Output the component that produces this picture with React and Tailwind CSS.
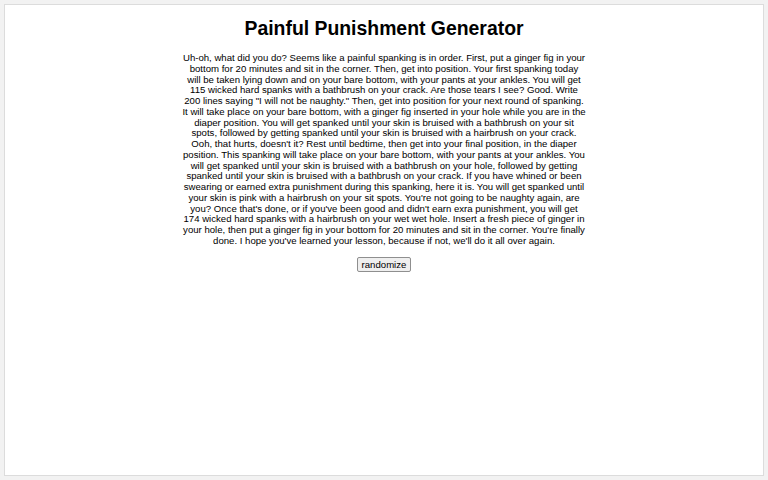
const STORY =
  "Uh-oh, what did you do? Seems like a painful spanking is in order. First, put a ginger fig in your bottom for 20 minutes and sit in the corner. Then, get into position. Your first spanking today will be taken lying down and on your bare bottom, with your pants at your ankles. You will get 115 wicked hard spanks with a bathbrush on your crack. Are those tears I see? Good. Write 200 lines saying \"I will not be naughty.\" Then, get into position for your next round of spanking. It will take place on your bare bottom, with a ginger fig inserted in your hole while you are in the diaper position. You will get spanked until your skin is bruised with a bathbrush on your sit spots, followed by getting spanked until your skin is bruised with a hairbrush on your crack. Ooh, that hurts, doesn't it? Rest until bedtime, then get into your final position, in the diaper position. This spanking will take place on your bare bottom, with your pants at your ankles. You will get spanked until your skin is bruised with a bathbrush on your hole, followed by getting spanked until your skin is bruised with a bathbrush on your crack. If you have whined or been swearing or earned extra punishment during this spanking, here it is. You will get spanked until your skin is pink with a hairbrush on your sit spots. You're not going to be naughty again, are you? Once that's done, or if you've been good and didn't earn exra punishment, you will get 174 wicked hard spanks with a hairbrush on your wet wet hole. Insert a fresh piece of ginger in your hole, then put a ginger fig in your bottom for 20 minutes and sit in the corner. You're finally done. I hope you've learned your lesson, because if not, we'll do it all over again.";

export default function App() {
  return (
    <div className="h-[480px] bg-[#f2f2f2] p-[4px] font-['Liberation_Sans',Arial,sans-serif] text-black">
      <div className="h-[472px] bg-white border border-[#dcdcdc] flex flex-col items-center">
        <h1 className="mt-[12px] text-[19.4px] leading-[23px] font-bold">Painful Punishment Generator</h1>
        <p className="mt-[13px] w-[404px] text-center text-[9.6px] leading-[10.76px]">{STORY}</p>
        <button className="mt-[10px] px-[4px] text-[9.6px] leading-[11px] py-[1px] bg-[#efefef] border border-[#8f8f8f] rounded-[2px]">
          randomize
        </button>
      </div>
    </div>
  );
}
